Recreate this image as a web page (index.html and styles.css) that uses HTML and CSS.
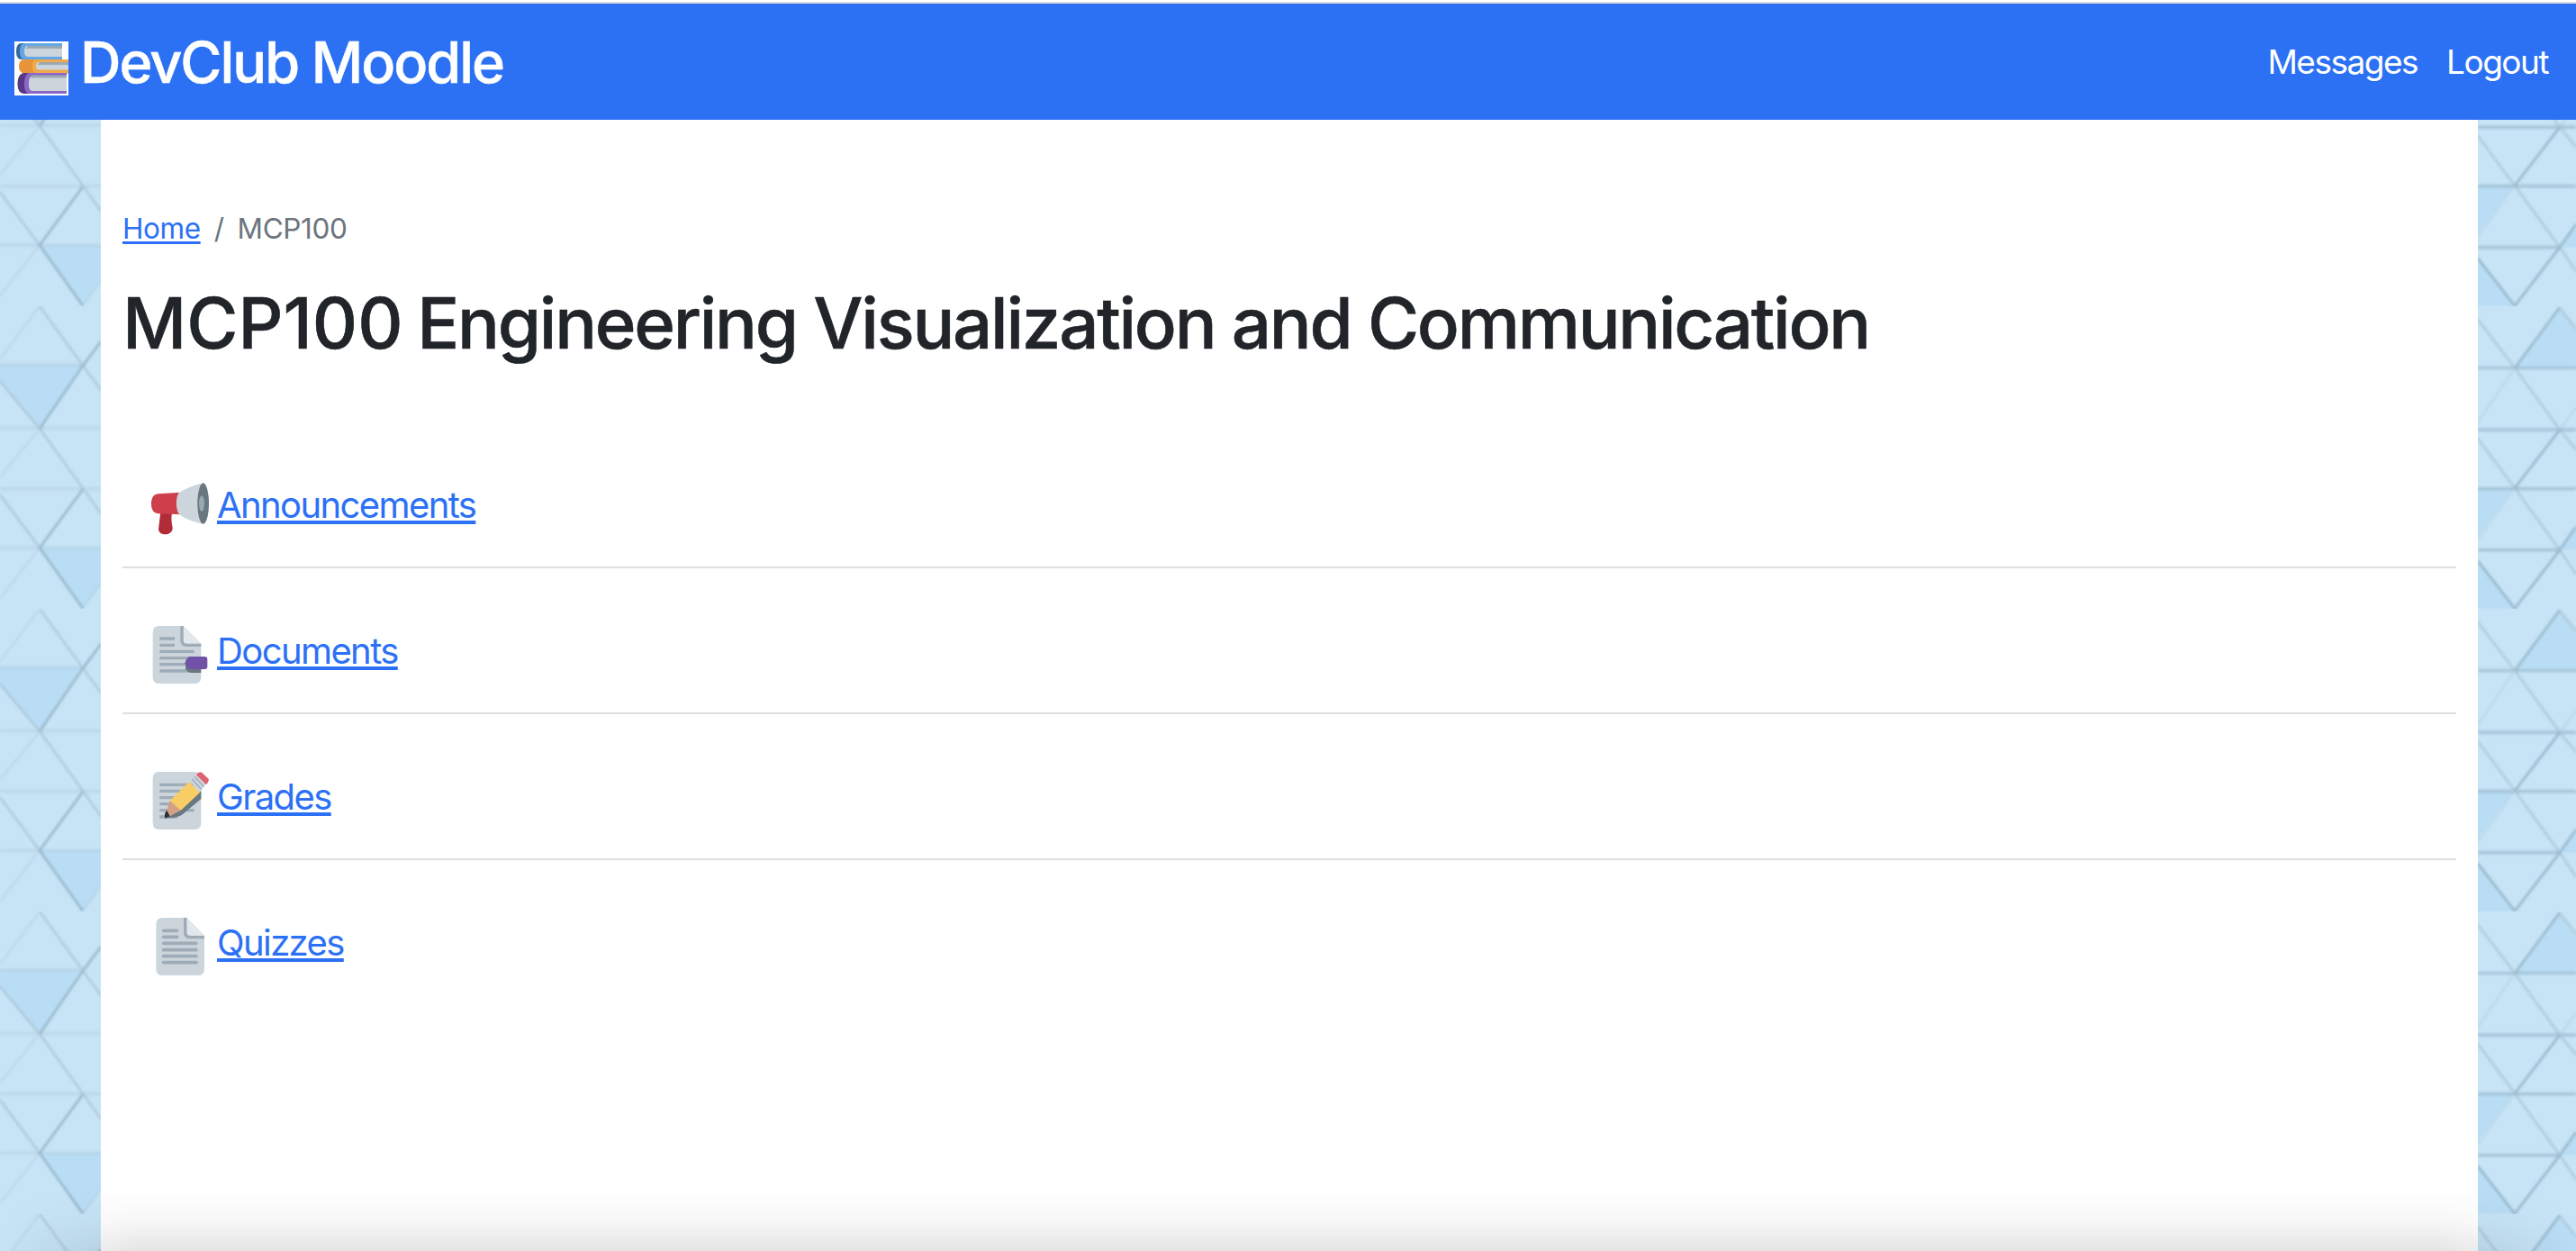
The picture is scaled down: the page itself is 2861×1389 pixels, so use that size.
FILE: index.html
```html
<!DOCTYPE html>
<html lang="en">
<head>
<meta charset="utf-8">
<title>DevClub Moodle</title>
<link rel="stylesheet" href="styles.css">
</head>
<body>
<header class="navbar">
  <a class="brand" href="#">
    <svg class="brand-logo" viewBox="0 0 60 60" aria-hidden="true">
      <rect width="60" height="60" fill="#fff"/>
      <path d="M53 2H8C4 2 2 5 2 11s2 9 6 9h45z" fill="#38689b"/>
      <path d="M53 2H12C8 2 6 5 6 11s2 9 6 9h41z" fill="#63a7e6"/>
      <path d="M53 5H15c-3 0-4 3-4 6s1 6 4 6h38z" fill="#ccd5dc"/>
      <path d="M53 5H15l-2 3h40z" fill="#9aaab4"/>
      <path d="M60 20H12c-5 0-7 3-7 7.500s2 8 7 8h48z" fill="#e8943a"/>
      <path d="M60 20H25c-4 0-5 3-5 7.500s1 8 5 8h35z" fill="#f1a94b"/>
      <path d="M60 23H28c-3 0-4 2-4 4.500s1 4 4 4h32z" fill="#ccd5dc"/>
      <path d="M60 23H28l-2 3h34z" fill="#9aaab4"/>
      <path d="M58 35H11c-5 0-7.500 5-7.500 12S6 58 11 58h47z" fill="#533986"/>
      <path d="M58 35H17c-4 0-6 5-6 12s2 11 6 11h41z" fill="#8e66c9"/>
      <path d="M58 38H20c-3 0-4 4-4 9s1 8 4 8h38z" fill="#ccd5dc"/>
      <path d="M58 37.500H19l-2 3h41z" fill="#9aaab4"/>
    </svg>
    <span class="brand-name">DevClub Moodle</span>
  </a>
  <nav class="nav-links">
    <a href="#">Messages</a>
    <a href="#">Logout</a>
  </nav>
</header>
<div class="page">
  <svg class="side side-left" aria-hidden="true">
    <defs>
      <filter id="soft" x="-10%" y="-10%" width="120%" height="120%"><feGaussianBlur stdDeviation="1.3"/></filter>
      <pattern id="tri-left" width="112" height="336" y="-129" patternUnits="userSpaceOnUse">
        <g transform="scale(1 1.2245)">
          <rect width="112" height="275" fill="#c6e4f6"/>
          <path d="M0 53H91L44 111 0 70zM45 219h67v33l-20 22z" fill="#b9ddf5"/>
          <g fill="none" stroke="#b0cbdc" stroke-width="2.500" filter="url(#soft)">
            <path d="M44 0 0 48M44 111 0 155M44 219 0 265M92 274l20-22" opacity=".4"/>
            <path d="M0 53h92M0 110.500h112M0 165.500h112M0 219h112" opacity=".55"/>
            <path d="M44 0 112 76M0 68l44 43 48 54 20 23M0 171l44 48"/>
            <path d="m112 32-20 22-48 57M92 166l-48 53 48 55" stroke="#98b9cc"/>
          </g>
        </g>
      </pattern>
    </defs>
    <rect width="112" height="1256" fill="url(#tri-left)"/>
  </svg>
  <main class="content">
    <ol class="breadcrumb">
      <li><a href="#">Home</a></li>
      <li>/</li>
      <li>MCP100</li>
    </ol>
    <h1 class="course-title">MCP100 <span class="course-name">Engineering Visualization and Communication</span></h1>
    <ul class="sections">
      <li class="section">
        <svg class="icon" viewBox="114 69 192 192" aria-hidden="true">
          <path d="M145 175h39c-4 17-3 31 1 53 1 27-44 30-47 5z" fill="#b22c38"/>
          <path d="M213 110l-75 5c-16 1-24 13-24 33s8 32 24 33l75 3z" fill="#cc3f4b"/>
          <path d="M286 80c-32 6-60 18-80 31-11 16-11 53 0 71 21 16 48 26 80 33z" fill="#cdd5dc"/>
          <ellipse cx="287" cy="147" rx="19" ry="68" fill="#687780"/>
          <ellipse cx="282" cy="147" rx="9" ry="26" fill="#98a7b2"/>
        </svg>
        <a href="#">Announcements</a>
      </li>
      <li class="section">
        <svg class="icon" viewBox="114 75 192 192" aria-hidden="true">
          <path d="M141 75h80l59 59v111q0 22-22 22H141q-22 0-22-22V97q0-22 22-22z" fill="#cdd5dc"/>
          <path d="M221 75v47q0 12 12 12h47z" fill="#e1e7eb"/>
          <path d="M216 75v48q0 16 17 16h47M142 117h50M142 139h50M142 160h115M142 182h115M142 203h115M142 225h100" fill="none" stroke="#9dacb7" stroke-width="10"/>
          <path d="M228 202l16-10h36v39h-33q-9 0-19-12z" fill="#687780"/>
          <path d="M243 177h49q9 0 9 9v24q0 9-9 9h-49q-7 0-17-20 7-22 17-22z" fill="#7152a7"/>
        </svg>
        <a href="#">Documents</a>
      </li>
      <li class="section">
        <svg class="icon" viewBox="114 81 192 192" aria-hidden="true">
          <path d="M141 81h117q22 0 22 22v148q0 22-22 22H141q-22 0-22-22V103q0-22 22-22z" fill="#cdd5dc"/>
          <path d="M142 124h115M142 145h115M142 167h115M142 188h115M142 209h115M142 231h60" stroke="#9dacb7" stroke-width="10"/>
          <path d="M280 144v27l-62 52q-13 11-55 12l47-27z" fill="#687780"/>
          <path d="M240 114l36 36-64 60-36-33z" fill="#f8cd66"/>
          <path d="M176 177l36 32-47 26q-6-2-4-12z" fill="#d39f85"/>
          <path d="M166 209l10 20-16 7q-4-18 6-27z" fill="#292f33"/>
          <path d="M264 92l30 31-18 24-35-35z" fill="#cbd5dd"/>
          <path d="M258 97l32 34M250 105l31 35" stroke="#98a9b5" stroke-width="4"/>
          <path d="M264 91q10-14 20-6l19 18q7 8-7 21z" fill="#dc6370"/>
        </svg>
        <a href="#">Grades</a>
      </li>
      <li class="section">
        <svg class="icon" viewBox="114 87 192 192" aria-hidden="true">
          <path d="M152 87h80l59 59v111q0 22-22 22H152q-22 0-22-22V109q0-22 22-22z" fill="#cdd5dc"/>
          <path d="M233 87v46q0 13 12 13h46z" fill="#e1e7eb"/>
          <path d="M227 87v49q0 16 17 16h47" fill="none" stroke="#9dacb7" stroke-width="10"/>
          <path d="M155 130h45M155 151h45M155 172h109M155 194h109M155 215h109M155 236h109" stroke="#9dacb7" stroke-width="11" stroke-linecap="round"/>
        </svg>
        <a href="#">Quizzes</a>
      </li>
    </ul>
  </main>
  <svg class="side side-right" aria-hidden="true">
    <defs>
      <pattern id="tri-right" width="109" height="336" y="-129" patternUnits="userSpaceOnUse">
        <g transform="translate(-21 0) scale(1 1.2245)">
          <rect width="130" height="275" fill="#c6e4f6"/>
          <path d="M112 2 64 56h66V20zM21 165h40l-40 43zM130 200l-16 21h16zM21 231l41 43H21z" fill="#b9ddf5"/>
          <g fill="none" stroke="#b0cbdc" stroke-width="2.500" filter="url(#soft)">
            <path d="M62 56 21 105M112 112l18-20M61 166l-40 45" opacity=".4"/>
            <path d="m21 12 41 44 50 56 18 18M21 120l41 45 50 56 18 22M112 2l18 18"/>
            <path d="M21 56h109M21 112h109M21 165.500h109M21 221h91" stroke="#a2c1d4"/>
            <path d="M112 1 63 55M112 112l-50 53M130 200l-18 21-50 53-41-43" stroke="#98b9cc"/>
          </g>
        </g>
      </pattern>
    </defs>
    <rect width="109" height="1256" fill="url(#tri-right)"/>
  </svg>
</div>
<div class="window-shadow"></div>
</body>
</html>
```
FILE: styles.css
```css
* { box-sizing: border-box; }
body {
  margin: 0;
  height: 1389px;
  overflow: hidden;
  background: #fff;
  color: #212529;
  font-family: Inter, "Liberation Sans", sans-serif;
  position: relative;
}
a { color: #2c71f5; }
ol, ul { list-style: none; margin: 0; padding: 0; }

.navbar {
  margin-top: 2px;
  height: 131px;
  border-top: 2px solid #dcdcdc;
  background: #2c71f4;
  display: flex;
  justify-content: space-between;
  padding: 0 31px 0 16px;
}
.navbar a { color: #fff; text-decoration: none; white-space: nowrap; }
.brand { display: flex; align-items: flex-start; gap: 13px; }
.brand-logo { width: 60px; height: 60px; margin-top: 42px; }
.brand-name {
  font-size: 63px;
  font-weight: 500;
  line-height: 76px;
  letter-spacing: -2.050px;
  margin-top: 27px;
  -webkit-text-stroke: .5px currentColor;
}
.nav-links {
  display: flex;
  gap: 32px;
  padding-top: 43px;
  font-size: 37px;
  line-height: 44px;
  letter-spacing: -1.5px;
}

.page { display: flex; height: 1256px; }
.side { height: 1256px; flex: none; display: block; }
.side-left { width: 112px; }
.side-right { width: 109px; }
.content { flex: 1; background: #fff; padding: 97px 24px 0; }

.breadcrumb {
  display: flex;
  gap: 15px;
  height: 48px;
  font-size: 31.500px;
  line-height: 48px;
  letter-spacing: -.4px;
  color: #6c757d;
}
.breadcrumb a, .section a { text-decoration-thickness: 3px; text-underline-offset: 3px; }
.course-title {
  margin: 33px 0 0;
  font-size: 78px;
  font-weight: 500;
  line-height: 96px;
  white-space: nowrap;
  -webkit-text-stroke: .5px currentColor;
}
.course-name { letter-spacing: -2.280px; margin-left: -5px; }
.sections { margin-top: 62px; }
.section {
  height: 162px;
  display: flex;
  align-items: flex-start;
  gap: 9px;
  padding: 64px 0 0 32px;
  border-bottom: 2px solid #dfdfdf;
}
.section:last-child { border-bottom: 0; }
.icon { width: 64px; height: 64px; }
.section a {
  font-size: 40px;
  line-height: 48px;
  letter-spacing: -1.600px;
  margin-top: 4px;
  text-decoration-thickness: 4px;
}

/* soft shade along the bottom edge of the window */
.window-shadow {
  position: absolute;
  left: 0;
  right: 0;
  bottom: 0;
  height: 66px;
  background: linear-gradient(rgba(0,0,0,0), rgba(0,0,0,.03) 50%, rgba(0,0,0,.1));
  -webkit-mask-image: linear-gradient(90deg, transparent, #000 150px, #000 calc(100% - 150px), transparent);
  mask-image: linear-gradient(90deg, transparent, #000 150px, #000 calc(100% - 150px), transparent);
}
```
